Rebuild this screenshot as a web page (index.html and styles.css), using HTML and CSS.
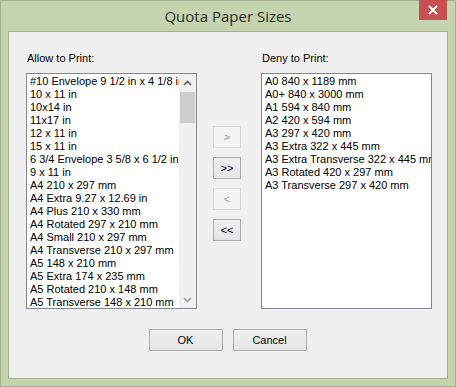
FILE: index.html
```html
<!DOCTYPE html>
<html lang="en">
<head>
  <meta charset="UTF-8">
  <title>Quota Paper Sizes</title>
  <link rel="stylesheet" href="styles.css">
</head>
<body>
  <div class="window">
    <div class="titlebar">
      <span></span>
      <div class="title">Quota Paper Sizes</div>
      <div class="close">
        <svg width="10" height="10" viewBox="0 0 10 10">
          <path d="M1 1 L9 9 M9 1 L1 9" stroke="#fff" stroke-width="2"/>
        </svg>
      </div>
    </div>
    <div class="client">
      <div class="panes">
        <div class="pane">
          <div class="label">Allow to Print:</div>
          <div class="listbox">
            <ul class="items">
              <li>#10 Envelope 9 1/2 in x 4 1/8 in</li>
              <li>10 x 11 in</li>
              <li>10x14 in</li>
              <li>11x17 in</li>
              <li>12 x 11 in</li>
              <li>15 x 11 in</li>
              <li>6 3/4 Envelope 3 5/8 x 6 1/2 in</li>
              <li>9 x 11 in</li>
              <li>A4 210 x 297 mm</li>
              <li>A4 Extra 9.27 x 12.69 in</li>
              <li>A4 Plus 210 x 330 mm</li>
              <li>A4 Rotated 297 x 210 mm</li>
              <li>A4 Small 210 x 297 mm</li>
              <li>A4 Transverse 210 x 297 mm</li>
              <li>A5 148 x 210 mm</li>
              <li>A5 Extra 174 x 235 mm</li>
              <li>A5 Rotated 210 x 148 mm</li>
              <li>A5 Transverse 148 x 210 mm</li>
            </ul>
            <div class="scrollbar">
              <div class="arrow">
                <svg width="9" height="6" viewBox="0 0 9 6"><path d="M1 5 L4.5 1.5 L8 5" fill="none" stroke="#606060" stroke-width="1.6"/></svg>
              </div>
              <div class="track">
                <div class="thumb"></div>
              </div>
              <div class="arrow">
                <svg width="9" height="6" viewBox="0 0 9 6"><path d="M1 1 L4.5 4.5 L8 1" fill="none" stroke="#a0a0a0" stroke-width="1.6"/></svg>
              </div>
            </div>
          </div>
        </div>

        <div class="movers">
          <button class="btn small" disabled>&gt;</button>
          <button class="btn small">&gt;&gt;</button>
          <button class="btn small" disabled>&lt;</button>
          <button class="btn small">&lt;&lt;</button>
        </div>

        <div class="pane">
          <div class="label">Deny to Print:</div>
          <div class="listbox">
            <ul class="items">
              <li>A0 840 x 1189 mm</li>
              <li>A0+ 840 x 3000 mm</li>
              <li>A1 594 x 840 mm</li>
              <li>A2 420 x 594 mm</li>
              <li>A3 297 x 420 mm</li>
              <li>A3 Extra 322 x 445 mm</li>
              <li>A3 Extra Transverse 322 x 445 mm</li>
              <li>A3 Rotated 420 x 297 mm</li>
              <li>A3 Transverse 297 x 420 mm</li>
            </ul>
          </div>
        </div>
      </div>

      <div class="actions">
        <button class="btn wide">OK</button>
        <button class="btn wide">Cancel</button>
      </div>
    </div>
  </div>
</body>
</html>
```

FILE: styles.css
```css
html, body {
  margin: 0;
  padding: 0;
}

body {
  font-family: "Liberation Sans", Arial, sans-serif;
  font-size: 11px;
  color: #000;
}

.window {
  width: 456px;
  height: 387px;
  box-sizing: border-box;
  background-color: #c5d3ae;
  border: 1px solid #a3b28e;
  display: flex;
  flex-direction: column;
}

.titlebar {
  height: 30px;
  display: grid;
  grid-template-columns: 1fr auto 1fr;
  align-items: start;
}

.title {
  font-family: "Open Sans", "Noto Sans", sans-serif;
  font-size: 15px;
  color: #2b2b2b;
  padding-top: 5px;
  line-height: 20px;
}

.close {
  justify-self: end;
  width: 28px;
  height: 20px;
  margin-right: 8px;
  margin-top: -1px;
  background-color: #c75050;
  display: flex;
  align-items: center;
  justify-content: center;
}

.client {
  flex: 1;
  margin: 0 7px 7px 7px;
  background-color: #f0f0f0;
  border: 1px solid #a3b28e;
  padding: 20px 15px 0 17px;
}

.panes {
  display: flex;
  align-items: flex-start;
}

.pane {
  width: 171px;
  display: flex;
  flex-direction: column;
}

.label {
  line-height: 13px;
  height: 13px;
  margin-bottom: 8px;
  padding-left: 1px;
}

.listbox {
  height: 236px;
  box-sizing: border-box;
  border: 1px solid #828790;
  background-color: #fff;
  display: flex;
  overflow: hidden;
}

.items {
  list-style: none;
  margin: 0;
  padding: 1px 0 0 3px;
  flex: 1;
  min-width: 0;
}

.items li {
  line-height: 13px;
  height: 13px;
  white-space: nowrap;
  overflow: hidden;
}

.scrollbar {
  width: 17px;
  background-color: #f0f0f0;
  display: flex;
  flex-direction: column;
}

.arrow {
  height: 17px;
  display: flex;
  align-items: center;
  justify-content: center;
}

.track {
  flex: 1;
}

.thumb {
  height: 31px;
  margin: 1px 1px 0 1px;
  background-color: #cdcdcd;
}

.movers {
  display: flex;
  flex-direction: column;
  gap: 9px;
  margin: 74px 20px 0 16px;
}

.btn {
  font-family: "Liberation Sans", Arial, sans-serif;
  font-size: 11px;
  color: #000;
  background: linear-gradient(#f0f0f0, #e5e5e5);
  border: 1px solid #acacac;
  padding: 0;
  height: 22px;
  box-sizing: border-box;
}

.btn:disabled {
  background: #f4f4f4;
  border-color: #d9d9d9;
  color: #a0a0a0;
}

.btn.small {
  width: 28px;
}

.btn.wide {
  width: 74px;
}

.actions {
  display: flex;
  justify-content: center;
  gap: 10px;
  margin-top: 20px;
  padding-right: 3px;
}
```
